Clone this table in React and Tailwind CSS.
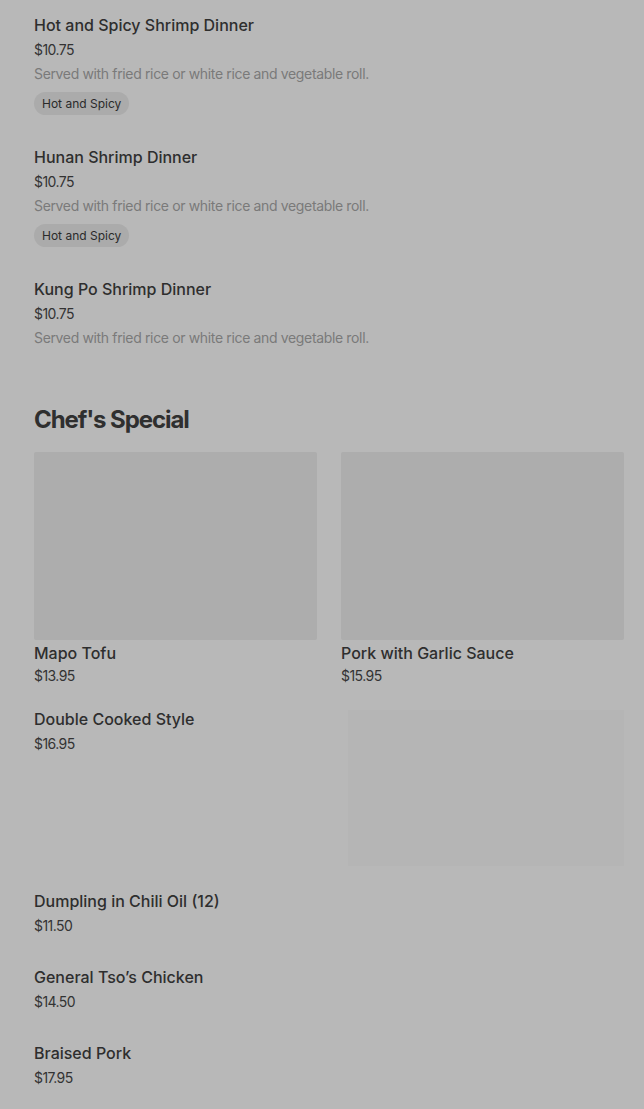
const shrimp = [
  { name: 'Hot and Spicy Shrimp Dinner', price: '$10.75', tag: 'Hot and Spicy' },
  { name: 'Hunan Shrimp Dinner', price: '$10.75', tag: 'Hot and Spicy' },
  { name: 'Kung Po Shrimp Dinner', price: '$10.75' },
];

const plain = [
  { name: 'Dumpling in Chili Oil (12)', price: '$11.50' },
  { name: "General Tso’s Chicken", price: '$14.50' },
  { name: 'Braised Pork', price: '$17.95' },
];

const Title = ({ children }) => (
  <h3 className="text-[16px] leading-5 font-medium text-[#2e2e2e]">{children}</h3>
);

const Price = ({ children, className = 'mt-[5px]' }) => (
  <p className={`${className} text-[14px] leading-5 tracking-[-0.04em] text-[#333]`}>{children}</p>
);

const App = () => {
  return (
    <div
      className="min-h-[1109px] bg-[#b8b8b8] pl-[34px] pr-[20px] pt-[15px]"
      style={{ fontFamily: 'Inter, "Noto Sans", sans-serif' }}
    >
      <div className="flex flex-col gap-[32px]">
        {shrimp.map((item) => (
          <div key={item.name}>
            <Title>{item.name}</Title>
            <Price>{item.price}</Price>
            <p className="mt-[4px] text-[14px] leading-5 tracking-[-0.025em] text-[#7a7a7a]">
              Served with fried rice or white rice and vegetable roll.
            </p>
            {item.tag && (
              <span className="mt-[8px] inline-flex h-[23px] items-center rounded-full bg-[#ababab] px-[8px] text-[12px] text-[#2a2a2a]">
                {item.tag}
              </span>
            )}
          </div>
        ))}
      </div>

      <h2 className="mt-[56px] text-[24px] leading-8 font-bold tracking-[-0.045em] text-[#2f2f2f]">
        Chef's Special
      </h2>

      <div className="mt-[16px] grid grid-cols-2 gap-[24px]">
        {[
          { name: 'Mapo Tofu', price: '$13.95' },
          { name: 'Pork with Garlic Sauce', price: '$15.95' },
        ].map((item) => (
          <div key={item.name}>
            <div className="h-[188px] rounded-[2px] bg-[#adadad]" />
            <div className="mt-[3px]">
              <Title>{item.name}</Title>
              <Price className="mt-[3px]">{item.price}</Price>
            </div>
          </div>
        ))}
      </div>

      <div className="mt-[23px] flex justify-between">
        <div>
          <Title>Double Cooked Style</Title>
          <Price>$16.95</Price>
        </div>
        <div className="mt-[1px] h-[156px] w-[276px] bg-[#b5b5b5]" />
      </div>

      <div className="mt-[25px] flex flex-col gap-[31px] pb-[21px]">
        {plain.map((item) => (
          <div key={item.name}>
            <Title>{item.name}</Title>
            <Price>{item.price}</Price>
          </div>
        ))}
      </div>
    </div>
  );
};

export default App;
